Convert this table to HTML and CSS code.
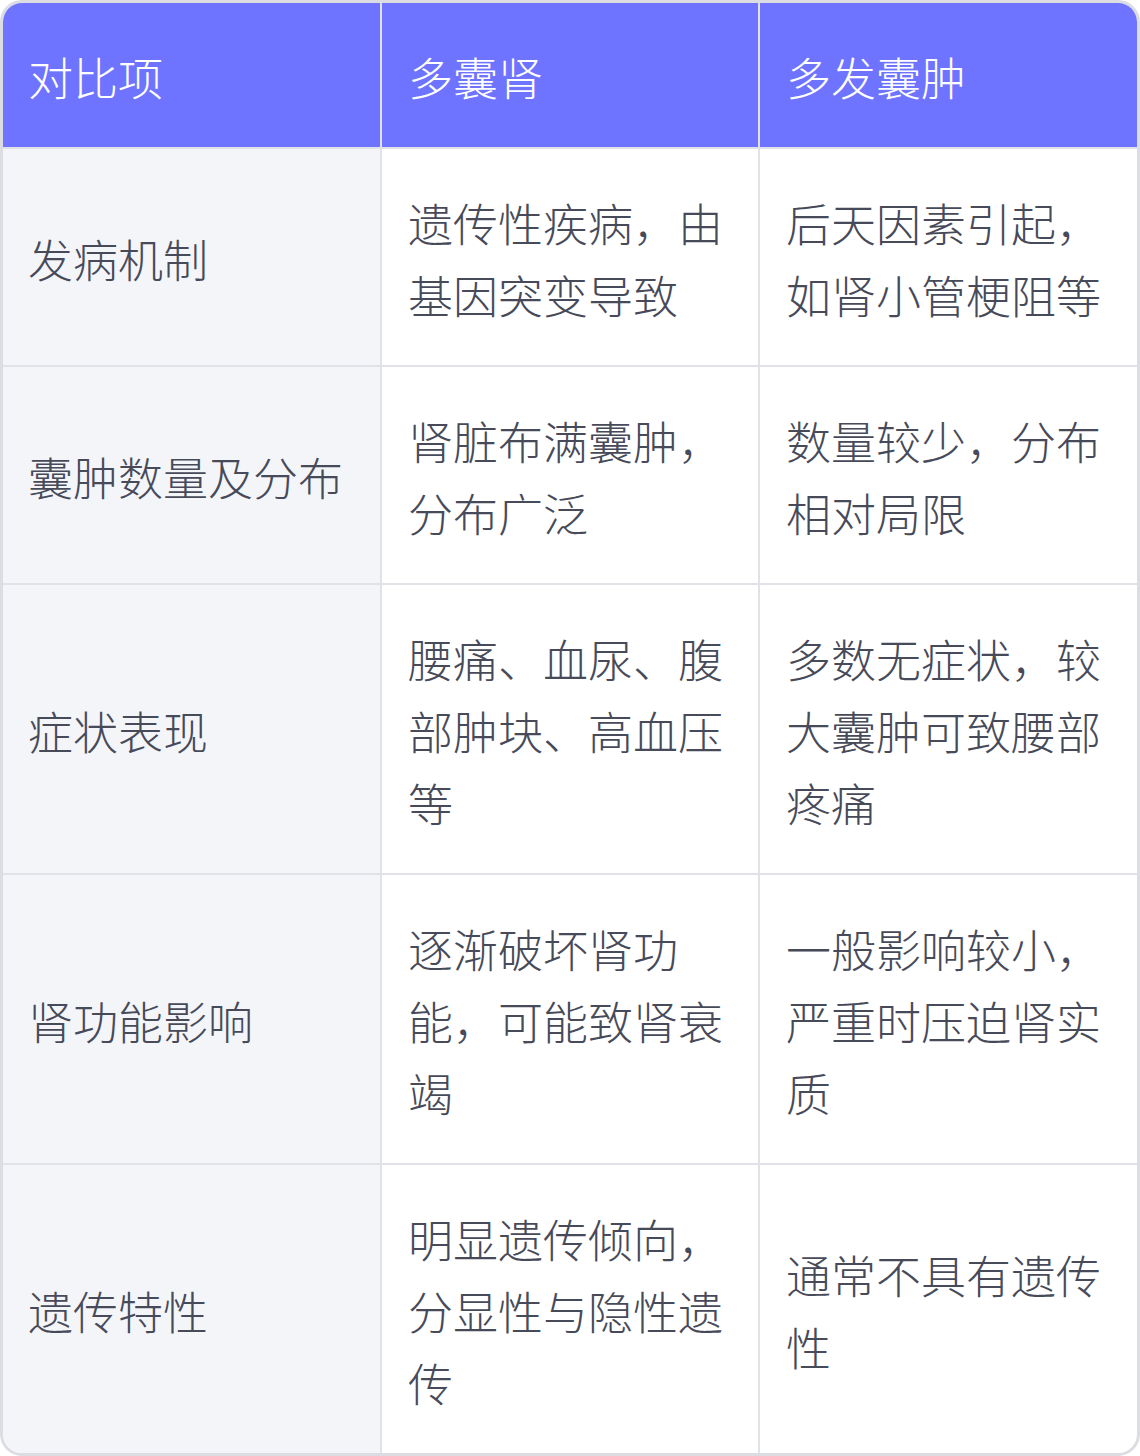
FILE: index.html
```html
<!DOCTYPE html>
<html lang="zh">
<head>
<meta charset="utf-8">
<link rel="stylesheet" href="styles.css">
</head>
<body>
<div class="wrap">
<table class="cmp">
<colgroup><col class="c1"><col class="c2"><col class="c3"></colgroup>
<thead>
<tr><th>对比项</th><th>多囊肾</th><th>多发囊肿</th></tr>
</thead>
<tbody>
<tr class="r2"><td>发病机制</td><td>遗传性疾病，由基因突变导致</td><td>后天因素引起，如肾小管梗阻等</td></tr>
<tr class="r2"><td>囊肿数量及分布</td><td>肾脏布满囊肿，分布广泛</td><td>数量较少，分布相对局限</td></tr>
<tr class="r3"><td>症状表现</td><td>腰痛、血尿、腹部肿块、高血压等</td><td>多数无症状，较大囊肿可致腰部疼痛</td></tr>
<tr class="r3"><td>肾功能影响</td><td>逐渐破坏肾功能，可能致肾衰竭</td><td>一般影响较小，严重时压迫肾实质</td></tr>
<tr class="r3"><td>遗传特性</td><td>明显遗传倾向，分显性与隐性遗传</td><td>通常不具有遗传性</td></tr>
</tbody>
</table>
</div>
</body>
</html>
```

FILE: styles.css
```css
html, body {
  margin: 0;
  padding: 0;
  background: #ffffff;
}
.wrap {
  width: 1140px;
  height: 1456px;
  box-sizing: border-box;
  border: 3px solid #dcdde2;
  border-radius: 22px;
  overflow: hidden;
}
.cmp {
  width: 100%;
  border-collapse: separate;
  border-spacing: 0;
  table-layout: fixed;
  font-family: "Noto Sans CJK SC", "Noto Sans", sans-serif;
  font-size: 45px;
  line-height: 72px;
  color: #474a59;
}
.c1 { width: 379px; }
.c2 { width: 378px; }
.c3 { width: auto; }
.cmp th,
.cmp td {
  text-align: left;
  vertical-align: middle;
  padding: 38px 26px 34px 26px;
  border-right: 2px solid #e1e2e7;
  border-bottom: 2px solid #e1e2e7;
  font-weight: 300;
  word-break: break-all;
}
.cmp th:last-child,
.cmp td:last-child {
  border-right: 0;
}
.cmp tbody tr:last-child td {
  border-bottom: 0;
}
.cmp th {
  background: #6e74ff;
  color: #ffffff;
  height: 72px;
}
.cmp td:first-child,
.cmp th:first-child {
  padding-left: 25px;
}
.cmp td:first-child {
  background: #f4f5f9;
}
.cmp tr.r2 td {
  height: 144px;
}
.cmp tr.r3 td {
  height: 216px;
}
```
